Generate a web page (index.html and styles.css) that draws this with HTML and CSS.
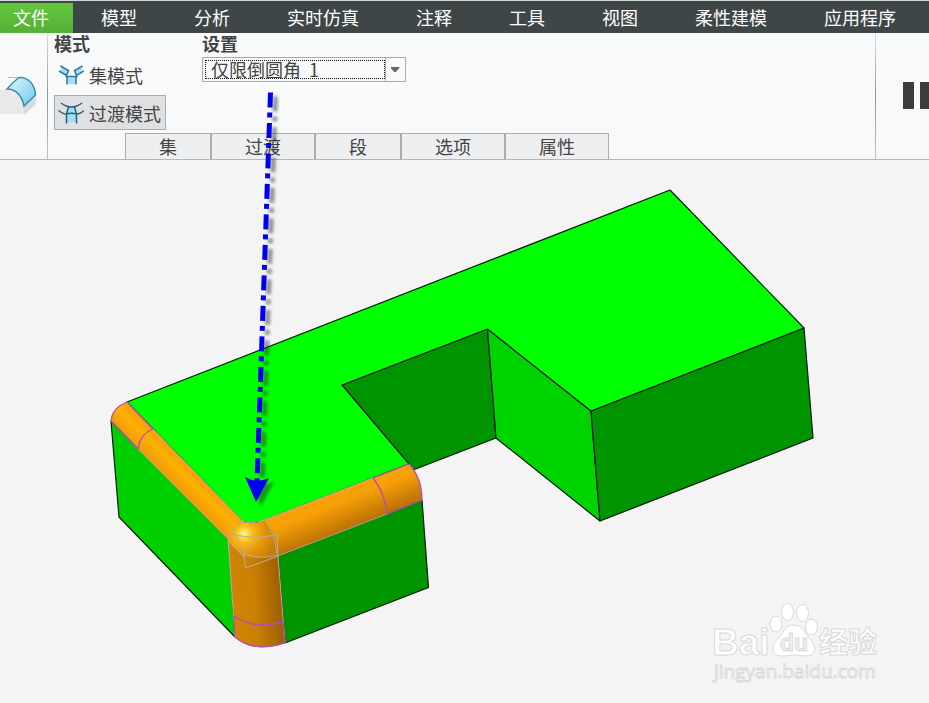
FILE: index.html
```html
<!DOCTYPE html>
<html lang="zh-CN">
<head>
<meta charset="utf-8">
<meta name="viewport" content="width=device-width, initial-scale=1">
<title>倒圆角</title>
<link rel="stylesheet" href="styles.css">
</head>
<body>
<nav class="menu">
  <a class="menu-item menu-file" href="#">文件</a>
  <a class="menu-item" href="#">模型</a>
  <a class="menu-item" href="#">分析</a>
  <a class="menu-item" href="#">实时仿真</a>
  <a class="menu-item" href="#">注释</a>
  <a class="menu-item" href="#">工具</a>
  <a class="menu-item" href="#">视图</a>
  <a class="menu-item" href="#">柔性建模</a>
  <a class="menu-item" href="#">应用程序</a>
</nav>

<header class="ribbon">
  <div class="tool">
    <svg width="40" height="44" viewBox="0 72 40 44" aria-hidden="true">
      <defs>
        <linearGradient id="roundFill" x1="0" y1="0" x2="1" y2="1">
          <stop offset="0" stop-color="#e4f7fe"/><stop offset="1" stop-color="#6cc8ec"/>
        </linearGradient>
      </defs>
      <path d="M0 90 L7 89 Q20 92 24 106 V114 H0Z" fill="#e9e9eb"/>
      <path d="M24 106 L36 96 V104 L24 115Z" fill="#d3dde4"/>
      <path d="M8 77.500 H18" stroke="#bbb" stroke-width="1"/>
      <path d="M7 89 Q13 82 19 77.500 C28 77 35 84 35.500 95 L24 106 C22 96 16 89 7 89Z" fill="url(#roundFill)" stroke="#3d8ba4" stroke-width="1.500"/>
    </svg>
  </div>
  <div class="dash">
    <div class="groups">
      <section class="group">
        <h2 class="group-title">模式</h2>
        <button class="mode" type="button">
          <svg width="26" height="22" viewBox="58 64 26 22" aria-hidden="true">
            <path d="M62 67 L68.500 70.500 L66.500 75.500 L60 71.500Z M81 67 L74.500 70.500 L76.500 75.500 L83 71.500Z M67 76 H76 V84 H67Z" fill="#9fe0f8"/>
            <path d="M60.500 66 L68.500 70.500 L66.500 75.500 L59 71 M82.500 66 L74.500 70.500 L76.500 75.500 L84 71 M65.500 76.500 H77.500 M67 76 V84.500 M76 76 V84.500" fill="none" stroke="#347791" stroke-width="1.500"/>
          </svg>
          集模式
        </button>
        <button class="mode mode-on" type="button" aria-pressed="true">
          <svg width="26" height="22" viewBox="58 102 26 22" aria-hidden="true">
            <path d="M68 107 Q71.500 108 75 107 L77 114 Q71.500 112.500 66 114Z M67 114 H76 V122 H67Z" fill="#9fe0f8"/>
            <path d="M61 103 Q71.500 111 82 103 M58.500 110.500 Q63 114 66 114 Q71.500 112.500 77 114 Q80 114 84 110.500 M68.500 107 L66.500 114 V123.500 M74.500 107 L76.500 114 V123.500" fill="none" stroke="#2c5d76" stroke-width="1.500"/>
          </svg>
          过渡模式
        </button>
      </section>
      <section class="group">
        <h2 class="group-title"><label for="transition">设置</label></h2>
        <div class="picker">
          <select id="transition"><option>仅限倒圆角&nbsp; 1</option></select>
        </div>
      </section>
    </div>
    <div class="panels">
      <button class="panel" type="button">集</button>
      <button class="panel" type="button">过渡</button>
      <button class="panel" type="button">段</button>
      <button class="panel" type="button">选项</button>
      <button class="panel" type="button">属性</button>
    </div>
  </div>
  <div class="control">
    <button class="pause" type="button" aria-label="暂停"></button>
  </div>
</header>

<main class="view">
  <svg class="scene" viewBox="0 160 929 543" preserveAspectRatio="xMinYMin meet" role="img" aria-label="实体模型">
    <defs>
      <linearGradient id="leftRound" gradientUnits="userSpaceOnUse" x1="190" y1="463" x2="168" y2="485">
        <stop offset="0" stop-color="#f39c08"/><stop offset=".4" stop-color="#ffb005"/><stop offset="1" stop-color="#e99505"/>
      </linearGradient>
      <linearGradient id="rightRound" gradientUnits="userSpaceOnUse" x1="335" y1="492" x2="350" y2="529">
        <stop offset="0" stop-color="#f9a208"/><stop offset=".3" stop-color="#f6a007"/><stop offset="1" stop-color="#ba7003"/>
      </linearGradient>
      <linearGradient id="frontRound" gradientUnits="userSpaceOnUse" x1="230" y1="590" x2="283" y2="587">
        <stop offset="0" stop-color="#d28506"/><stop offset=".45" stop-color="#ca8004"/><stop offset="1" stop-color="#9a5c03"/>
      </linearGradient>
      <radialGradient id="ball" gradientUnits="userSpaceOnUse" cx="244" cy="534" r="33">
        <stop offset="0" stop-color="#fff890"/><stop offset=".25" stop-color="#f9bd17"/><stop offset=".55" stop-color="#eb9907"/><stop offset="1" stop-color="#c57b05"/>
      </radialGradient>
    </defs>

    <g stroke="#071807" stroke-width="1.200" stroke-linejoin="round">
      <path d="M342 385 L487.500 329 L496 438 L413 470Z" fill="#009500"/>
      <path d="M487.500 329 L591 411 L600 521 L496 438Z" fill="#00d400"/>
      <path d="M591 411 L804 328 L813 438 L600 521Z" fill="#009500"/>
      <path d="M278 556 L422 500 L428.500 587.500 L285 643Z" fill="#009500"/>
      <path d="M111 421 L229 540 L235 637 L119 517Z" fill="#00d000"/>
      <path d="M127 402 L670 190 L804 328 L591 411 L487.500 329 L342 385 L409 464 L262 521 Q249 525 242 521Z" fill="#0f0"/>
    </g>

    <path d="M127 402 Q112 408 111 421 L230 542 L245 523Z" fill="url(#leftRound)"/>
    <path d="M260 521 L409 464 Q421 476 422 500 L275 557Z" fill="url(#rightRound)"/>
    <path d="M228 540 L235 637 Q253 654 285 643 L278 550Z" fill="url(#frontRound)"/>
    <path d="M228 541 Q232 529 242 523 Q253 525 265 520 Q276 532 278 554 Q260 561 243 556Z" fill="url(#ball)"/>

    <g fill="none" stroke="#b9ada2" stroke-width="1">
      <path d="M153 429 L242 521 Q250 525 265 520 L373 478"/>
      <path d="M138 449 L228 539 L235 637 M387 514 L278 556 L285 643"/>
      <path d="M228 539 Q232 527 244 521 M265 520 Q274 532 277 554 M227 532 Q240 538 262 537 Q274 536 277 533 L278 556 L246 568 L244 557 L228 541 M244 557 Q246 543 261 537 M246 554 Q260 560 278 555 M234 533 Q242 544 245 558"/>
    </g>
    <g fill="none" stroke="#b64cb8" stroke-width="1.300">
      <path d="M153 429 L127 402 Q112 408 111 421 L138 449 Q140 434 153 429"/>
      <path d="M373 478 L409 464 Q422 478 422 500 L387 514 Q385 493 373 478"/>
      <path d="M234 616 Q253 630 283 622 L285 643 Q253 653 235 637Z"/>
    </g>

    <g class="mark">
      <text class="mark-name" x="712" y="655">Bai</text>
      <ellipse cx="776" cy="624" rx="6" ry="8"/>
      <ellipse cx="787.500" cy="612" rx="6" ry="8.500"/>
      <ellipse cx="802.500" cy="613" rx="6" ry="8.500"/>
      <ellipse cx="811.500" cy="627" rx="6" ry="8"/>
      <path d="M794 625 C784 625 784 634 777 640 C769 648 773 656 782 656 C787 656 789 655 794 655 C800 655 802 656 807 656 C816 656 817 647 811 640 C804 634 804 625 794 625Z"/>
      <text class="mark-du" x="780" y="651">du</text>
      <text class="mark-cn" x="819" y="653">经验</text>
      <text class="mark-url" x="714" y="678">jingyan.baidu.com</text>
    </g>
  </svg>
</main>

<svg class="pointer" width="50" height="424" viewBox="236 86 50 424" aria-hidden="true">
  <defs>
    <filter id="soft" x="-50%" y="-5%" width="200%" height="110%"><feGaussianBlur stdDeviation="1.500"/></filter>
    <g id="arrow">
      <path d="M270.500 92.500 L257 482" fill="none" stroke-width="5" stroke-dasharray="15 5 5 5.500"/>
      <path d="M245 477 Q257 484 269 478 L256 502Z" stroke="none"/>
    </g>
  </defs>
  <use href="#arrow" x="5" y="4" fill="#333" stroke="#333" opacity=".5" filter="url(#soft)"/>
  <use href="#arrow" fill="#0000f0" stroke="#0000f0"/>
</svg>
</body>
</html>
```
FILE: styles.css
```css
* {
  box-sizing: border-box;
}

body {
  position: relative;
  display: flex;
  flex-direction: column;
  min-height: 100vh;
  margin: 0;
  overflow-x: hidden;
  background: #f4f4f5;
  color: #444;
  font: 18px/22px "Noto Sans CJK SC", sans-serif;
}

button,
select {
  margin: 0;
  color: inherit;
  font: inherit;
}

.menu {
  display: flex;
  height: 33px;
  border-top: 1px solid #cfdad8;
  background: #3e4647;
}

.menu-item {
  padding: 0 29px 0 28px;
  color: #fff;
  line-height: 32px;
  text-decoration: none;
  white-space: nowrap;
}

.menu-file {
  margin-top: 2px;
  padding: 0 24px 0 13px;
  background: linear-gradient(#62c83d, #55af37);
  line-height: 28px;
}

.ribbon {
  display: grid;
  grid-template-columns: 48px 1fr 54px;
  border-bottom: 1px solid #b4b7b9;
  background: #f8f9fb;
}

.tool {
  padding-top: 39px;
  border-right: 1px solid;
  border-image: linear-gradient(#dcdee0, #909498 50%, #c4c6c8) 1;
}

.tool svg {
  display: block;
}

.groups {
  display: flex;
  gap: 36px;
  padding: 0 6px 3px;
}

.group {
  display: flex;
  flex-direction: column;
  align-items: flex-start;
  gap: 3px;
}

.group-title {
  margin: 0;
  font-size: 18px;
  line-height: 21px;
}

.mode {
  display: flex;
  align-items: center;
  gap: 5px;
  height: 35px;
  padding: 0 4px 0 3px;
  border: 1px solid transparent;
  background: none;
}

.mode-on {
  border-color: #a9abad;
  background: #dfe0e2;
}

.picker {
  position: relative;
  width: 204px;
  height: 25px;
}

.picker select {
  width: 100%;
  height: 100%;
  padding: 0 24px 2px 8px;
  border: 1px solid #a8aaac;
  border-radius: 0;
  outline: none;
  background: #f9fafb;
  line-height: 22px;
  appearance: none;
}

.picker::before {
  content: "";
  position: absolute;
  inset: 3px 21px 3px 3px;
  border: 1px dotted #111;
  pointer-events: none;
}

.picker::after {
  content: "";
  position: absolute;
  inset: 1px 1px 1px auto;
  width: 19px;
  border-left: 1px solid #a8aaac;
  background: linear-gradient(#666, #666) center / 9px 5px no-repeat;
  background-clip: content-box;
  clip-path: polygon(0 0, 1px 0, 1px 9px, 5px 9px, 15px 9px, 10px 15px, 5px 9px, 1px 9px, 1px 100%, 0 100%);
  pointer-events: none;
}

.panels {
  display: flex;
  padding-left: 77px;
}

.panel {
  height: 26px;
  padding: 0 33px 2px;
  border: 1px solid #aaacae;
  border-bottom: 0;
  background: #eeeff1;
  line-height: 22px;
}

.control {
  padding: 49px 0 0 27px;
  border-left: 1px solid;
  border-image: linear-gradient(#dcdee0, #909498 50%, #c4c6c8) 1;
}

.pause {
  display: block;
  width: 100%;
  height: 27px;
  padding: 0;
  border: 0;
  background: linear-gradient(90deg, #3d3b3d 11px, transparent 11px 17px, #3d3b3d 17px);
}

.view {
  flex: 1;
}

.scene {
  display: block;
  width: 100%;
}

.mark {
  fill: #fff;
  stroke: #d9d9d9;
  stroke-width: 1px;
  font-family: "Liberation Sans", "Noto Sans CJK SC", sans-serif;
}

.mark-name {
  font-size: 37px;
  font-weight: bold;
}

.mark-du {
  fill: #f0f0f0;
  font-size: 23px;
  font-weight: bold;
}

.mark-cn {
  font: bold 29px "Noto Sans CJK SC", sans-serif;
}

.mark-url {
  font: 19px "Open Sans", sans-serif;
}

.pointer {
  position: absolute;
  top: 86px;
  left: 236px;
  pointer-events: none;
}
```
